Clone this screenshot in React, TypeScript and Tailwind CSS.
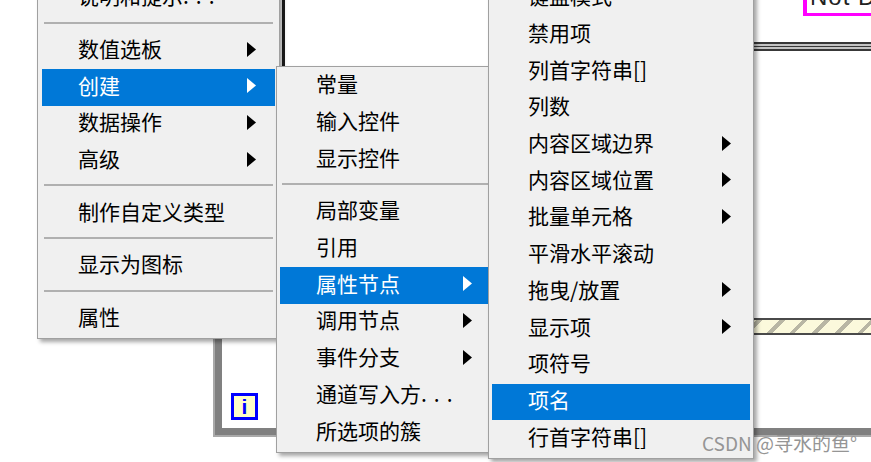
type Entry = { label?: string; arrow?: boolean; active?: boolean; sep?: boolean }

const createMenu: Entry[] = [
  { label: '说明和提示...' },
  { sep: true },
  { label: '数值选板', arrow: true },
  { label: '创建', arrow: true, active: true },
  { label: '数据操作', arrow: true },
  { label: '高级', arrow: true },
  { sep: true },
  { label: '制作自定义类型' },
  { sep: true },
  { label: '显示为图标' },
  { sep: true },
  { label: '属性' },
]

const nodeMenu: Entry[] = [
  { label: '常量' },
  { label: '输入控件' },
  { label: '显示控件' },
  { sep: true },
  { label: '局部变量' },
  { label: '引用' },
  { label: '属性节点', arrow: true, active: true },
  { label: '调用节点', arrow: true },
  { label: '事件分支', arrow: true },
  { label: '通道写入方...' },
  { label: '所选项的簇' },
]

const propMenu: Entry[] = [
  { label: '键盘模式' },
  { label: '禁用项' },
  { label: '列首字符串[]' },
  { label: '列数' },
  { label: '内容区域边界', arrow: true },
  { label: '内容区域位置', arrow: true },
  { label: '批量单元格', arrow: true },
  { label: '平滑水平滚动' },
  { label: '拖曳/放置', arrow: true },
  { label: '显示项', arrow: true },
  { label: '项符号' },
  { label: '项名', active: true },
  { label: '行首字符串[]' },
]

function Arrow({ white }: { white?: boolean }) {
  return (
    <svg width="9" height="15" viewBox="0 0 9 15" className="shrink-0">
      <polygon points="0,0 9,7.5 0,15" fill={white ? '#ffffff' : '#000000'} />
    </svg>
  )
}

function Label({ text }: { text: string }) {
  if (text.endsWith('...')) {
    return (
      <span className="whitespace-nowrap">
        {text.slice(0, -3)}
        <span className="tracking-[7px]">...</span>
      </span>
    )
  }
  return <span className="whitespace-nowrap">{text}</span>
}

function Menu({ items, className }: { items: Entry[]; className: string }) {
  return (
    <div
      className={`absolute bg-[#f0f0f0] border border-[#a0a0a0] shadow-[3px_3px_4px_rgba(0,0,0,0.35)] font-['Noto_Sans_CJK_SC',sans-serif] text-[21px] leading-none ${className}`}
    >
      {items.map((it, i) =>
        it.sep ? (
          <div key={i} className="h-[16px] px-[2px] pt-[5px]">
            <div className="h-[2px] bg-[#b0b0b0]" />
          </div>
        ) : (
          <div
            key={i}
            className={`flex items-center h-[36.7px] pb-[5px] pl-[36px] pr-[19px] ${
              it.active ? 'bg-[#0078d7] text-white' : 'text-black'
            }`}
          >
            <Label text={it.label!} />
            {it.arrow && (
              <span className="ml-auto flex pt-[1px]">
                <Arrow white={it.active} />
              </span>
            )}
          </div>
        )
      )}
    </div>
  )
}

export default function App() {
  return (
    <div className="relative w-[871px] h-[462px] overflow-hidden bg-white">
      {/* block diagram behind the menus */}
      <div className="absolute left-[213px] top-[300px] right-[-20px] bottom-[25px] bg-[#a9a9a9] pl-[2px] pb-[2px]">
        <div className="h-full bg-[#808080] pl-[7px] pb-[7px]">
          <div className="h-full bg-white" />
        </div>
      </div>

      <div className="absolute left-[231px] top-[393px] w-[27px] h-[27px] border-[3px] border-[#0000ff] bg-[#ffffc8] flex items-center justify-center font-['Liberation_Sans',sans-serif] font-bold text-[21px] leading-none text-[#0000ff]">
        i
      </div>

      <div className="absolute left-[282px] top-0 w-[3px] h-[70px] bg-[#1c1c1c]" />

      <div className="absolute left-[803px] top-[-30px] right-[-10px] h-[46px] border-l-[4.5px] border-b-[3.5px] border-[#ff00ff] pl-[3px] pt-[15px] font-['Liberation_Sans',sans-serif] text-[24px] leading-none tracking-[1px] text-[#222] whitespace-nowrap">
        Not Def
      </div>

      <div className="absolute left-[740px] right-0 top-[42px] h-[9px] flex flex-col justify-between bg-[#c4c4c4]">
        <div className="h-[1.8px] bg-[#383838]" />
        <div className="h-[1.8px] bg-[#383838]" />
        <div className="h-[1.8px] bg-[#383838]" />
      </div>

      <div className="absolute left-[740px] right-0 top-[318px] h-[17px] border-t-[2.5px] border-b-[2.5px] border-[#4a4a4a] bg-[repeating-linear-gradient(135deg,#fbf9dc_0px,#fbf9dc_12px,#b8b6a4_12px,#b8b6a4_16px)]" />

      {/* context menus */}
      <Menu items={createMenu} className="left-[37px] top-[-24px] w-[243px] px-[4px] pt-[3px]" />
      <Menu items={nodeMenu} className="left-[276px] top-[66px] w-[219px] px-[3px] py-[1px]" />
      <Menu items={propMenu} className="left-[488px] top-[-24px] w-[266px] px-[3px] pt-[3px] pb-[1px]" />

      <div className="absolute left-[702px] top-[433px] font-['Noto_Sans_CJK_SC',sans-serif] text-[19px] leading-none text-[#959595] whitespace-nowrap">
        CSDN @寻水的鱼°
      </div>
    </div>
  )
}
